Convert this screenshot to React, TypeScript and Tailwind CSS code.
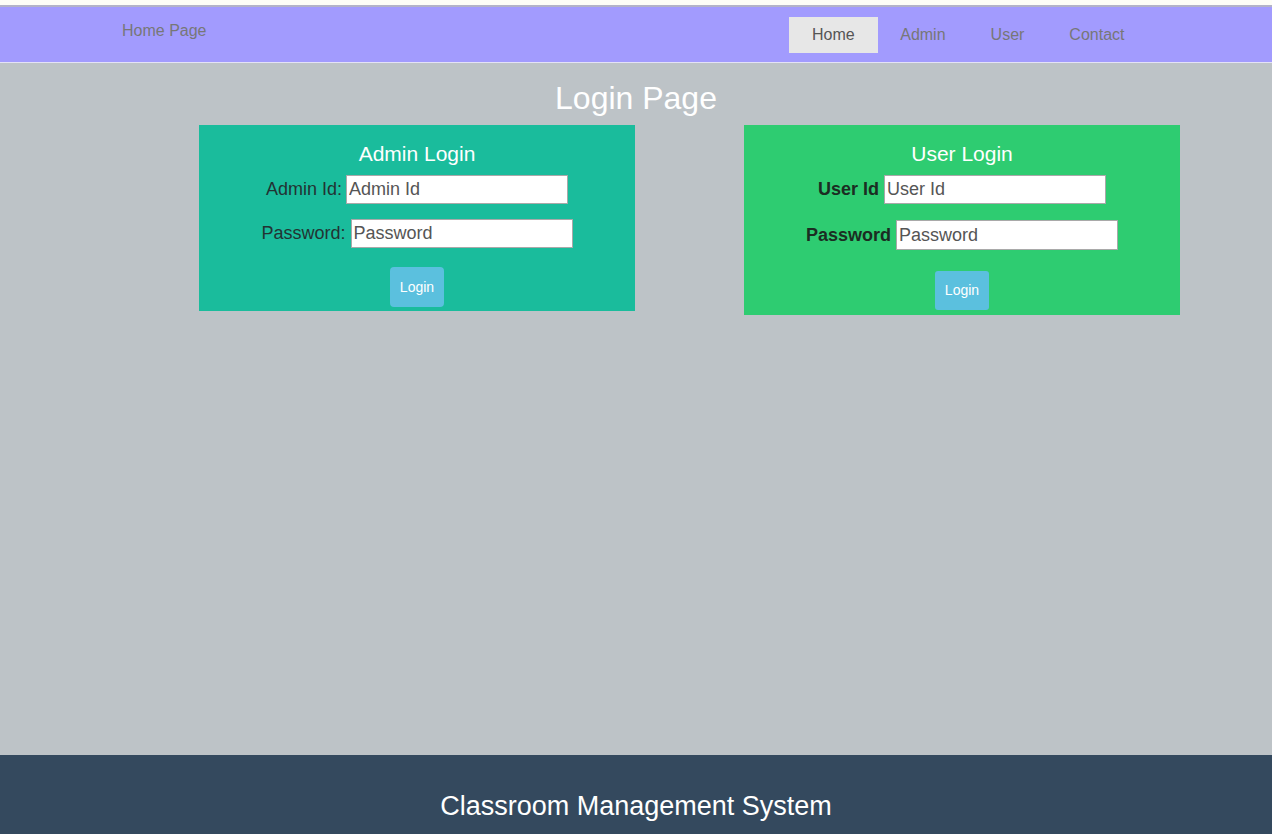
import React from 'react';

const font = { fontFamily: '"Liberation Sans", Arial, sans-serif' };

const NavItem: React.FC<{ label: string; active?: boolean }> = ({ label, active }) => (
  <li
    className={
      active
        ? 'h-[36px] px-[23px] flex items-center bg-[#e7e7e7] text-[#555]'
        : 'h-[36px] px-[22.5px] flex items-center text-[#777]'
    }
  >
    {label}
  </li>
);

export default function App() {
  return (
    <div className="h-screen w-full flex flex-col bg-[#bdc3c7] overflow-hidden" style={font}>
      {/* top strip */}
      <div className="h-[7px] bg-[#fdfdf7] border-b-2 border-[#b3b3c8] shrink-0"></div>

      {/* Navbar */}
      <nav className="h-[56px] shrink-0 bg-[#a29bfe] border-b border-[#e4e2f7] flex items-start justify-between pl-[122px] pr-[125px]">
        <span className="text-[16px] text-[#777] mt-[12px]">Home Page</span>
        <ul className="flex text-[16px] mt-[10px]">
          <NavItem label="Home" active />
          <NavItem label="Admin" />
          <NavItem label="User" />
          <NavItem label="Contact" />
        </ul>
      </nav>

      {/* Main */}
      <main className="flex-1">
        <h1 className="text-[32px] text-white text-center leading-[36px] mt-[17px] mb-[9px]">Login Page</h1>
        <div className="flex items-start pl-[199px] gap-[109px]">
          {/* Admin */}
          <div className="w-[436px] h-[186px] bg-[#1abc9c] flex flex-col items-center">
            <h2 className="text-[21px] text-white leading-[24px] mt-[17px]">Admin Login</h2>
            <div className="flex items-center mt-[9px] text-[18px] text-[#233]">
              <label>Admin Id:</label>
              <input
                placeholder="Admin Id"
                className="ml-[4px] w-[222px] h-[29px] bg-white border border-[#a9a9a9] px-[2px] text-[18px] placeholder-[#555] outline-none"
                style={font}
              />
            </div>
            <div className="flex items-center mt-[15px] text-[18px] text-[#233]">
              <label>Password:</label>
              <input
                placeholder="Password"
                className="ml-[5px] w-[222px] h-[29px] bg-white border border-[#a9a9a9] px-[2px] text-[18px] placeholder-[#555] outline-none"
                style={font}
              />
            </div>
            <button className="mt-[19px] w-[54px] h-[40px] rounded-[4px] bg-[#5bc0de] text-white text-[14px]" style={font}>
              Login
            </button>
          </div>

          {/* User */}
          <div className="w-[436px] h-[190px] bg-[#2ecc71] flex flex-col items-center">
            <h2 className="text-[21px] text-white leading-[24px] mt-[17px]">User Login</h2>
            <div className="flex items-center mt-[9px] text-[18px] font-bold text-[#1b2d22]">
              <label>User Id</label>
              <input
                placeholder="User Id"
                className="ml-[5px] w-[222px] h-[29px] bg-white border border-[#a9a9a9] px-[2px] text-[18px] font-normal placeholder-[#555] outline-none"
                style={font}
              />
            </div>
            <div className="flex items-center mt-[16px] text-[18px] font-bold text-[#1b2d22]">
              <label>Password</label>
              <input
                placeholder="Password"
                className="ml-[5px] w-[222px] h-[30px] bg-white border border-[#a9a9a9] px-[2px] text-[18px] font-normal placeholder-[#555] outline-none"
                style={font}
              />
            </div>
            <button className="mt-[21px] w-[54px] h-[39px] rounded-[3px] bg-[#5bc0de] text-white text-[14px]" style={font}>
              Login
            </button>
          </div>
        </div>
      </main>

      {/* Footer */}
      <footer className="h-[79px] shrink-0 bg-[#34495e] flex justify-center pt-[35px]">
        <span className="text-[27px] text-white leading-[32px]">Classroom Management System</span>
      </footer>
    </div>
  );
}
